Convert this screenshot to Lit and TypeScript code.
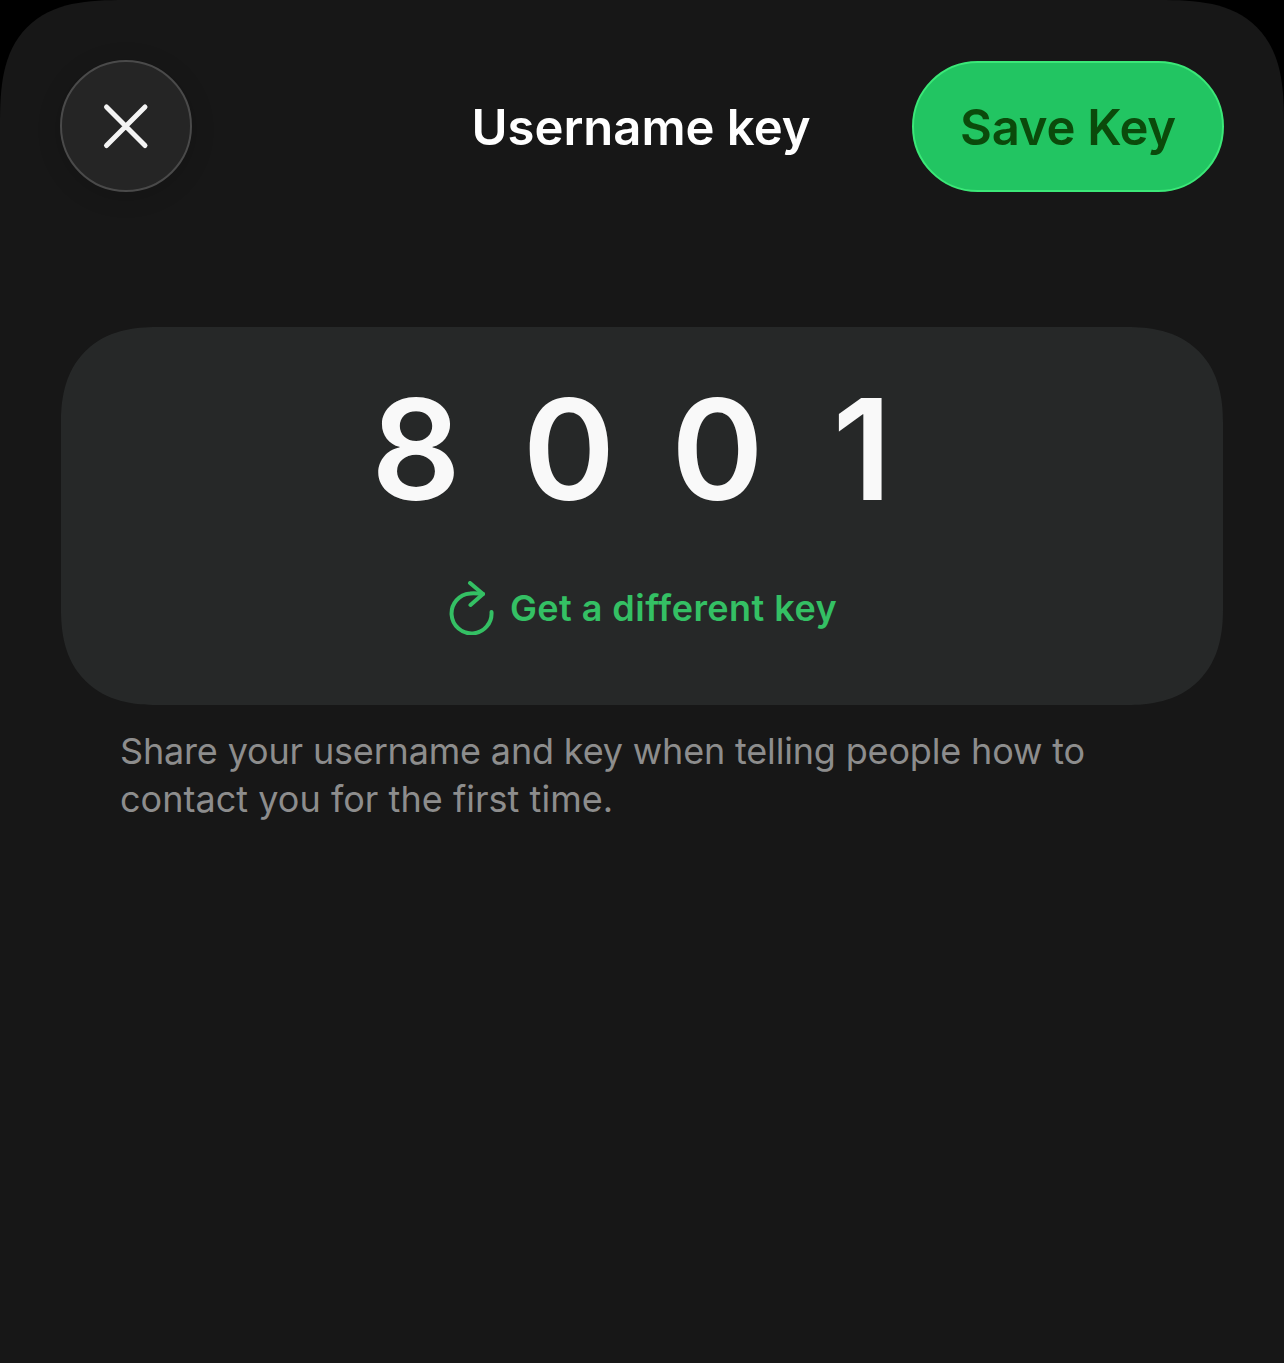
import { LitElement, html, css } from "lit";
import { customElement } from "lit/decorators.js";

@customElement("app-root")
export class AppRoot extends LitElement {
  static styles = css`
    :host { display: block; background: #000; width: 1284px; height: 1363px; overflow: hidden; font-family: Inter, "Liberation Sans", sans-serif; }
    .sheet { box-sizing: border-box; height: 1363px; background: #171717; border-radius: 125px 125px 0 0; corner-shape: superellipse(1.5); padding: 60px 60px 0; display: flex; flex-direction: column; }
    .head { display: grid; grid-template-columns: 312px 1fr 312px; align-items: center; height: 132px; }
    .close { box-sizing: border-box; width: 132px; height: 132px; border-radius: 50%; background: #252525; border: 2px solid #4a4a4a; display: flex; align-items: center; justify-content: center; box-shadow: 0 4px 24px rgba(0,0,0,.15); }
    .close svg { display: block; }
    .title { text-align: center; color: #fff; font-size: 49px; font-weight: 600; letter-spacing: 0; line-height: 58px; margin-left: -2px; padding-top: 3px; }
    .save { box-sizing: border-box; width: 312px; height: 131px; padding-top: 2px; border-radius: 66px; background: #22c562; border: 2px solid #3be878; color: #0b4a0b; font-size: 49px; font-weight: 600; letter-spacing: -0.25px; display: flex; align-items: center; justify-content: center; }
    .card { margin: 135px 1px 0; height: 378px; box-sizing: border-box; border-radius: 96px; corner-shape: superellipse(1.25); background: #262828; display: flex; flex-direction: column; align-items: center; padding-top: 49px; }
    .digits { display: flex; gap: 56px; color: #f9f9f9; font-size: 140px; font-weight: 600; line-height: 146px; height: 146px; margin-left: -21px; }
    .eight { margin-right: 6px; }
    .one { margin-left: 13px; }
    .again { display: flex; align-items: center; gap: 15px; color: #34c064; font-size: 36px; font-weight: 600; letter-spacing: 0.45px; margin: 58px 0 0 2px; height: 56px; }
    .note { margin: 22px 60px 0; color: #8d8d8d; font-size: 36px; line-height: 48px; font-weight: 400; }
    .l1 { display: block; letter-spacing: -0.17px; }
    .l2 { display: block; letter-spacing: 0.03px; }
  `;

  render() {
    return html`<div class="sheet">
      <div class="head">
        <div class="close">
          <svg width="48" height="48" viewBox="0 0 48 48" fill="none" stroke="#f4f4f4" stroke-width="5" stroke-linecap="round"><path d="M4.5 5 43 43.500M43 5 4.5 43.500"/></svg>
        </div>
        <div class="title">Username key</div>
        <div class="save">Save Key</div>
      </div>
      <div class="card">
        <div class="digits"><span class="eight">8</span><span>0</span><span>0</span><span class="one">1</span></div>
        <div class="again">
          <svg width="46" height="54" viewBox="0 0 46 54" fill="none" stroke="#34c064" stroke-width="4" stroke-linecap="round" stroke-linejoin="round"><path d="M42.500 31A20 20 0 1 1 21 12.500C25 12 30 12.500 34 13"/><path d="M21 2 34 13 21.500 24"/></svg>
          <span>Get a different key</span>
        </div>
      </div>
      <div class="note"><span class="l1">Share your username and key when telling people how to</span><span class="l2">contact you for the first time.</span></div>
    </div>`;
  }
}
